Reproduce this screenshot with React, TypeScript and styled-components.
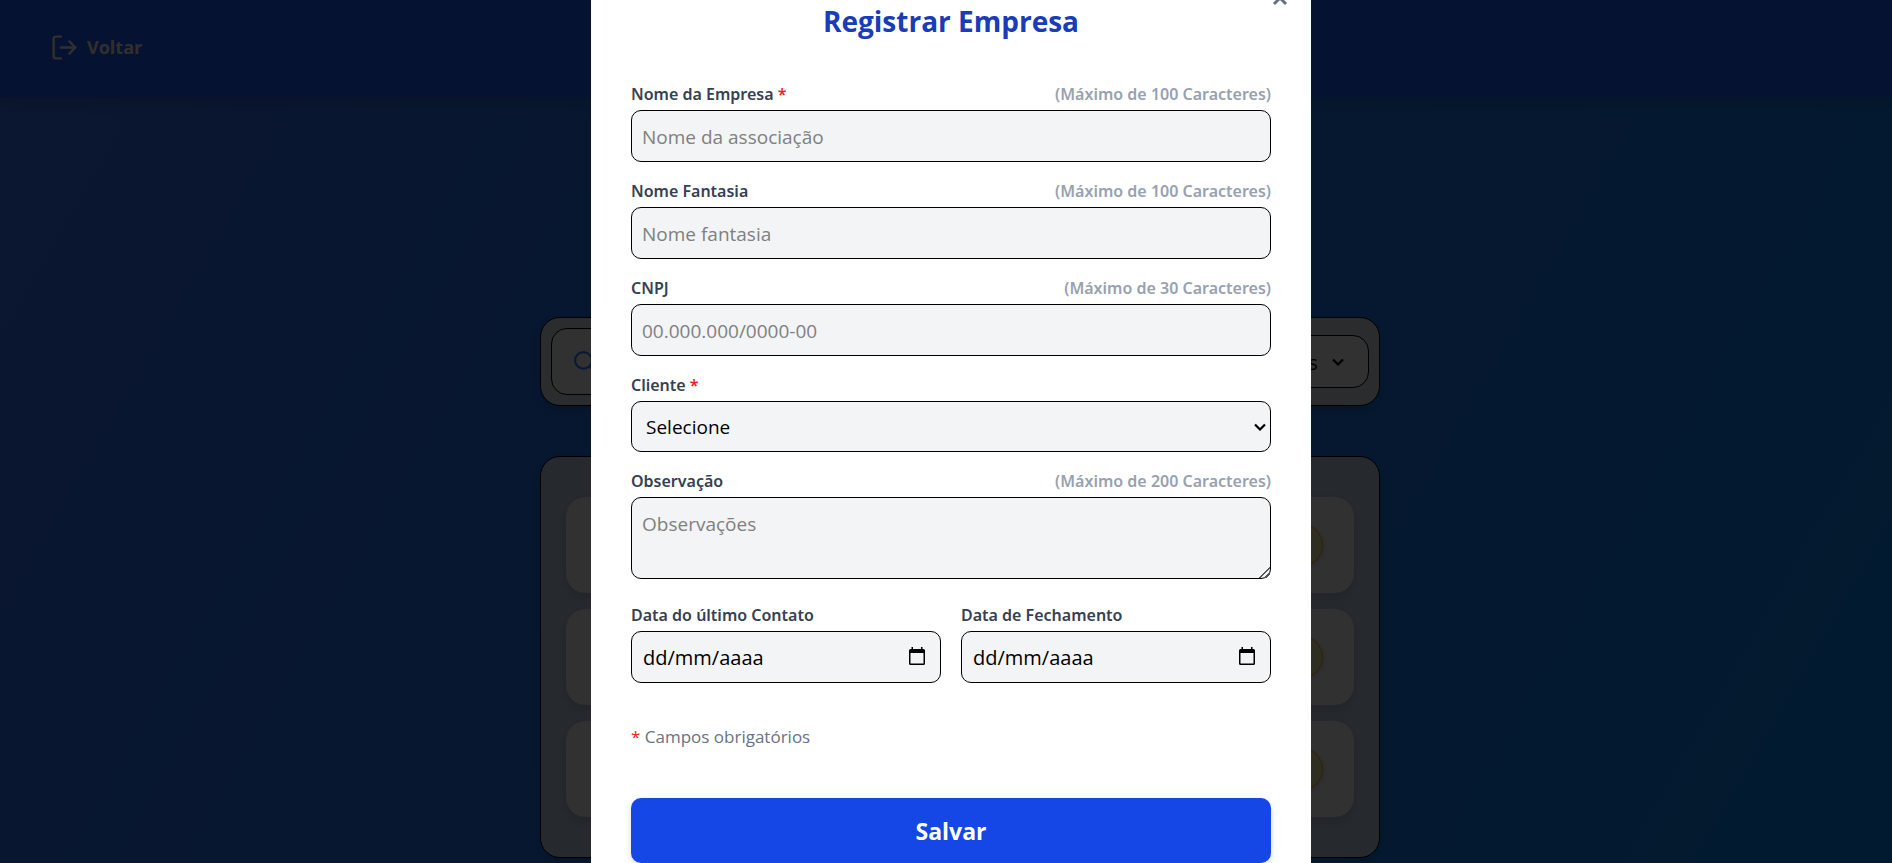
import React from "react";
import styled, { createGlobalStyle } from "styled-components";
import { LogOut, Search } from "lucide-react";

const GlobalStyle = createGlobalStyle`
  *, *::before, *::after { box-sizing: border-box; }
  body {
    margin: 0;
    overflow: hidden;
    font-family: "Segoe UI", "Open Sans", "Noto Sans", sans-serif;
    font-size: 18px;
    line-height: 25px;
  }
  button, input, select, textarea { font: inherit; }
`;

const Page = styled.div`
  min-height: 100vh;
  background: linear-gradient(120deg, #3c6ef0 0%, #2373eb 35%, #1e78eb 60%, #0a82eb 100%);
`;

const Header = styled.header`
  display: flex;
  align-items: center;
  height: 97px;
  padding: 0 50px 2px;
  background: linear-gradient(90deg, #195af5, #195ffa 50%, #195af5);
  box-shadow: 0 4px 16px rgba(0, 0, 0, 0.15);
`;

const BackLink = styled.a`
  display: flex;
  align-items: center;
  gap: 8px;
  color: #f5ebe1;
  font-size: 18px;
  font-weight: 700;
  text-decoration: none;
`;

const Main = styled.main`
  display: flex;
  flex-direction: column;
  gap: 50px;
  max-width: 868px;
  margin: 0 auto;
  padding: 220px 0 5px 28px;
`;

const Panel = styled.section`
  border: 1px solid #000;
  border-radius: 20px;
  box-shadow: 0 4px 12px rgba(0, 0, 0, 0.12);
`;

const FilterBar = styled(Panel)`
  display: flex;
  align-items: center;
  gap: 20px;
  padding: 10px;
  background: #d2dce1;
`;

const SearchBox = styled.label`
  display: flex;
  flex: 1;
  align-items: center;
  gap: 10px;
  height: 67px;
  padding: 0 20px;
  border: 1px solid #000;
  border-radius: 16px;
  background: #f5f5f5;
  color: #2b7fff;
`;

const SearchInput = styled.input`
  flex: 1;
  border: 0;
  background: none;
  outline: 0;
`;

const SelectWrap = styled.div`
  position: relative;
`;

const StatusSelect = styled.select`
  appearance: none;
  height: 53px;
  padding: 2px 50px 0 20px;
  border: 1px solid #000;
  border-radius: 16px;
  background: #f5f5f5;
  color: #000;
  font-size: 20px;
`;

const Arrow = styled.svg<{ $right: number }>`
  position: absolute;
  top: 50%;
  right: ${(p) => p.$right}px;
  transform: translateY(-50%);
  pointer-events: none;
`;

const ListPanel = styled(Panel)`
  display: flex;
  flex-direction: column;
  gap: 16px;
  padding: 40px 25px;
  background: #bed2eb;
`;

const ListItem = styled.article`
  display: flex;
  align-items: center;
  justify-content: flex-end;
  height: 96px;
  padding: 0 31px;
  border-radius: 20px;
  background: #f5f5f5;
  box-shadow: 0 4px 12px rgba(0, 0, 0, 0.15);
`;

const EditButton = styled.button`
  width: 42px;
  height: 42px;
  border: 1px solid #f0b100;
  border-radius: 50%;
  background: #e8e4b0;
  box-shadow: 0 2px 6px rgba(0, 0, 0, 0.2);
`;

const Overlay = styled.div`
  position: fixed;
  inset: 0;
  display: flex;
  align-items: center;
  justify-content: center;
  padding-left: 10px;
  background: rgba(0, 0, 0, 0.8);
`;

const Modal = styled.div`
  position: relative;
  flex-shrink: 0;
  width: 100%;
  max-width: 720px;
  padding: 40px;
  border-radius: 20px;
  background: #fff;
`;

const CloseButton = styled.button`
  position: absolute;
  top: 27px;
  right: 20px;
  display: flex;
  padding: 0;
  border: 0;
  background: none;
  color: #6a7282;
`;

const Title = styled.h2`
  margin: 0 0 39px;
  color: #193cb8;
  font-size: 28px;
  line-height: 42px;
  font-weight: 700;
  text-align: center;
`;

const Form = styled.form`
  display: flex;
  flex-direction: column;
  gap: 16px;
`;

const Field = styled.div<{ $spaced?: boolean }>`
  display: flex;
  flex: 1;
  flex-direction: column;
  gap: 2px;
  min-width: 0;
  margin-bottom: ${(p) => (p.$spaced ? "7px" : "0")};
`;

const FieldHead = styled.div`
  display: flex;
  justify-content: space-between;
  font-family: "Segoe UI", "Noto Sans", sans-serif;
  font-size: 16px;
  line-height: 27px;
  font-weight: 600;
`;

const Label = styled.label`
  color: #364153;
`;

const Hint = styled.span`
  color: #99a1af;
`;

const Required = styled.span`
  color: #fb1a28;
`;

const controlStyle = `
  width: 100%;
  border: 1px solid #000;
  border-radius: 10px;
  background: #f3f4f6;
  color: #000;
  font-size: 19px;
  outline: 0;
  &::placeholder { color: #808080; opacity: 1; }
`;

const TextInput = styled.input`
  ${controlStyle}
  display: block;
  height: 52px;
  padding: 1px 10px 0;
`;

const Select = styled.select`
  ${controlStyle}
  appearance: none;
  display: block;
  height: 51px;
  padding: 1px 14px 0;
`;

const TextArea = styled.textarea`
  ${controlStyle}
  display: block;
  height: 82px;
  padding: 14px 10px 12px;
  resize: vertical;
  &::-webkit-resizer {
    background: linear-gradient(
        135deg,
        transparent 46%,
        #555 46% 56%,
        transparent 56% 72%,
        #555 72% 82%,
        transparent 82%
      )
      right bottom / 11px 11px no-repeat;
  }
`;

const DateRow = styled.div`
  display: flex;
  gap: 20px;
`;

const DateBox = styled.div`
  position: relative;
`;

const DateInput = styled(TextInput)`
  padding: 1px 44px 0 11px;
  font-size: 20px;
  &::placeholder { color: #000; }
`;

const CalendarIcon = styled.svg`
  position: absolute;
  top: 16px;
  right: 15px;
  pointer-events: none;
`;

const Note = styled.p`
  margin: 25px 0 33px;
  color: #6a7282;
  font-size: 17px;
`;

const SaveButton = styled.button`
  height: 65px;
  padding: 2px 0 0;
  border: 0;
  border-radius: 10px;
  background: #1447e6;
  color: #fff;
  font-size: 23px;
  font-weight: 700;
  box-shadow: 0 2px 6px rgba(0, 0, 0, 0.15);
`;

type HeadProps = { id: string; label: string; required?: boolean; max?: number };

const Head = ({ id, label, required, max }: HeadProps) => (
  <FieldHead>
    <Label htmlFor={id}>
      {label}
      {required && <Required> *</Required>}
    </Label>
    {max && <Hint>(Máximo de {max} Caracteres)</Hint>}
  </FieldHead>
);

const SelectArrow = ({ right }: { right: number }) => (
  <Arrow $right={right} width="12" height="8" viewBox="0 0 12 8" fill="none" aria-hidden="true">
    <path d="M1 1.500 6 6.500l5-5" stroke="#000" strokeWidth="2.200" />
  </Arrow>
);

const DateField = ({ id, label }: HeadProps) => (
  <Field>
    <Head id={id} label={label} />
    <DateBox>
      <DateInput id={id} type="text" inputMode="numeric" placeholder="dd/mm/aaaa" />
      <CalendarIcon width="18" height="20" viewBox="0 0 18 20" aria-hidden="true">
        <path
          fill="#000"
          fillRule="evenodd"
          d="M3.500 0h1.500v2h8V0h1.500v2H15.500a1.500 1.500 0 0 1 1.500 1.500V16.500a1.500 1.500 0 0 1-1.500 1.500h-13A1.500 1.500 0 0 1 1 16.500V3.500A1.500 1.500 0 0 1 2.500 2h1zM2.500 6v10.500h13V6z"
        />
      </CalendarIcon>
    </DateBox>
  </Field>
);

export default function App() {
  return (
    <>
      <GlobalStyle />
      <Page>
        <Header>
          <BackLink href="#">
            <LogOut size={29} />
            Voltar
          </BackLink>
        </Header>
        <Main>
          <FilterBar>
            <SearchBox>
              <Search size={25} />
              <SearchInput type="search" aria-label="Pesquisar" />
            </SearchBox>
            <SelectWrap>
              <StatusSelect aria-label="Filtro">
                <option>Todos</option>
              </StatusSelect>
              <SelectArrow right={25} />
            </SelectWrap>
          </FilterBar>
          <ListPanel>
            {[1, 2, 3].map((n) => (
              <ListItem key={n}>
                <EditButton type="button" aria-label="Editar" />
              </ListItem>
            ))}
          </ListPanel>
        </Main>
      </Page>
      <Overlay>
        <Modal role="dialog" aria-modal="true" aria-labelledby="modal-title">
          <CloseButton type="button" aria-label="Fechar">
            <svg width="22" height="22" viewBox="0 0 22 22" fill="none">
              <path d="m5 5 12 12M17 5 5 17" stroke="currentColor" strokeWidth="3" />
            </svg>
          </CloseButton>
          <Title id="modal-title">Registrar Empresa</Title>
          <Form>
            <Field>
              <Head id="nome" label="Nome da Empresa" required max={100} />
              <TextInput id="nome" placeholder="Nome da associação" />
            </Field>
            <Field>
              <Head id="fantasia" label="Nome Fantasia" max={100} />
              <TextInput id="fantasia" placeholder="Nome fantasia" />
            </Field>
            <Field>
              <Head id="cnpj" label="CNPJ" max={30} />
              <TextInput id="cnpj" placeholder="00.000.000/0000-00" />
            </Field>
            <Field>
              <Head id="cliente" label="Cliente" required />
              <SelectWrap>
                <Select id="cliente">
                  <option>Selecione</option>
                </Select>
                <SelectArrow right={5} />
              </SelectWrap>
            </Field>
            <Field $spaced>
              <Head id="obs" label="Observação" max={200} />
              <TextArea id="obs" placeholder="Observações" />
            </Field>
            <DateRow>
              <DateField id="contato" label="Data do último Contato" />
              <DateField id="fechamento" label="Data de Fechamento" />
            </DateRow>
            <Note>
              <Required>*</Required> Campos obrigatórios
            </Note>
            <SaveButton type="submit">Salvar</SaveButton>
          </Form>
        </Modal>
      </Overlay>
    </>
  );
}
